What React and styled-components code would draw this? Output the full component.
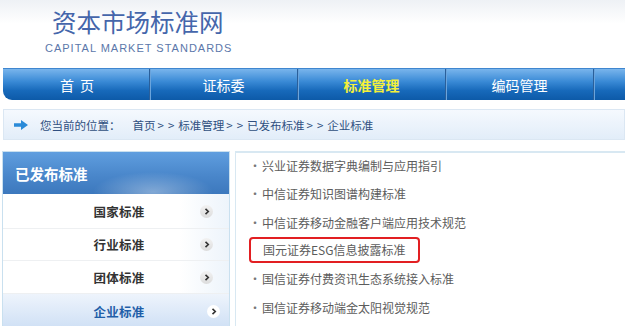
import React from "react";
import styled, { createGlobalStyle } from "styled-components";

const GlobalStyle = createGlobalStyle`
  body {
    margin: 0;
    background: #fff;
    font-family: "Noto Sans CJK SC", "Noto Sans", sans-serif;
  }
`;

const Page = styled.div`
  width: 625px;
  height: 326px;
  overflow: hidden;
  background: #fff;
`;

const Header = styled.div`
  height: 68px;
  padding-left: 45px;
  box-sizing: border-box;
  background: linear-gradient(#eef1f5, #fff 35%);
  display: flex;
  flex-direction: column;
`;

const LogoTitle = styled.div`
  margin: 6px 0 0 7px;
  font-size: 24.5px;
  line-height: 32px;
  color: #4566ab;
`;

const LogoSub = styled.div`
  margin-top: 4px;
  font-family: "Liberation Sans", Arial, sans-serif;
  font-size: 11px;
  line-height: 12px;
  letter-spacing: 1px;
  color: #5b77aa;
`;

const NavBar = styled.div`
  height: 32px;
  margin-left: 3px;
  display: flex;
  border-bottom-left-radius: 9px;
  border-top: 1px solid #3f86cf;
  box-sizing: border-box;
  background: linear-gradient(#79b5ec 0%, #3a8ad6 40%, #1769ba 70%, #0d5aa8 100%);
`;

const NavItem = styled.div`
  width: 148px;
  flex-shrink: 0;
  display: flex;
  align-items: center;
  justify-content: center;
  font-size: 14px;
  padding-left: ${(p) => (p.spaced ? "8px" : "0")};
  box-sizing: border-box;
  color: ${(p) => (p.active ? "#f4f03a" : "#fff")};
  font-weight: ${(p) => (p.active ? "bold" : "normal")};
  letter-spacing: ${(p) => (p.spaced ? "6px" : "0")};
  border-right: 1px solid #2a5f9a;
  box-shadow: 1px 0 0 #6aa4dc;
  &:first-child {
    width: 147px;
  }
`;

const Crumb = styled.div`
  margin: 9px 0 0 3px;
  height: 31px;
  box-sizing: border-box;
  border: 1px solid #dbe7f3;
  background: linear-gradient(#f5f9fe, #e2edf9);
  display: flex;
  align-items: center;
  padding-left: 10px;
  font-size: 11.5px;
  color: #2f4f80;
`;

const CrumbArrow = styled.svg`
  width: 14px;
  height: 10px;
  margin-right: 12px;
`;

const CrumbLabel = styled.span`
  margin-right: 12px;
`;

const Gt = styled.span`
  letter-spacing: 4px;
  margin-left: 2px;
`;

const Main = styled.div`
  margin-top: 11px;
  display: flex;
  align-items: flex-start;
`;

const Sidebar = styled.div`
  width: 228px;
  margin-left: 2px;
  flex-shrink: 0;
  border: 1px solid #c9e0ef;
  border-bottom: none;
  box-sizing: border-box;
`;

const SideHead = styled.div`
  height: 42px;
  display: flex;
  align-items: center;
  padding-left: 12px;
  font-size: 14.5px;
  font-weight: bold;
  color: #fff;
  background:
    radial-gradient(ellipse 60px 20px at 150px 40px, rgba(255, 255, 255, 0.35), transparent),
    linear-gradient(#5f9edf, #4a87cb 55%, #3c78bd);
`;

const SideList = styled.div`
  background: linear-gradient(to right, #fff 78%, #edf4fb);
`;

const SideRow = styled.div`
  height: ${(p) => p.h}px;
  box-sizing: border-box;
  display: flex;
  align-items: center;
  font-size: 12.5px;
  font-weight: bold;
  color: ${(p) => (p.active ? "#1f5ea8" : "#333")};
  background: ${(p) => (p.active ? "linear-gradient(#eef4fc, #cfe0f5)" : "transparent")};
  border-bottom: ${(p) => (p.last ? "none" : "1px solid #eef0f2")};
`;

const SideText = styled.span`
  width: 150px;
  margin-left: 41px;
  text-align: center;
  letter-spacing: 0.3px;
`;

const Chevron = styled.span`
  width: 13px;
  height: 13px;
  border-radius: 50%;
  background: ${(p) => (p.active ? "#fff" : "linear-gradient(#f2f2f2, #dcdcdc)")};
  display: flex;
  align-items: center;
  justify-content: center;
  margin-left: ${(p) => (p.active ? "13px" : "6px")};
`;

const Content = styled.div`
  flex: 1;
  margin-left: 5px;
  height: 176px;
  border-top: 2px solid #d8e8f2;
  border-left: 1px solid #d8e8f2;
  box-sizing: border-box;
`;

const ListRow = styled.div`
  height: ${(p) => p.h}px;
  display: flex;
  align-items: center;
  padding-left: 13px;
  font-size: 12px;
  color: #5c5c5c;
  white-space: nowrap;
`;

const Dot = styled.span`
  width: 13px;
  color: #777;
`;

const Marked = styled.span`
  padding: 2px 12px 3px 12px;
  border: 2px solid #e21f22;
  border-radius: 4px;
`;

const Arrow = () => (
  <CrumbArrow viewBox="0 0 14 10">
    <path d="M0 3.2h7V0l7 5-7 5V6.8H0z" fill="#2a8ad8" />
  </CrumbArrow>
);

const ChevronIcon = ({ active }) => (
  <Chevron active={active}>
    <svg width="6" height="7" viewBox="0 0 6 7">
      <path d="M1.5 0.8L4.3 3.5 1.5 6.2" fill="none" stroke="#333" strokeWidth="1.6" />
    </svg>
  </Chevron>
);

const navItems = [
  { label: "首页", spaced: true },
  { label: "证标委" },
  { label: "标准管理", active: true },
  { label: "编码管理" },
  { label: "" },
];

const sideItems = [
  { label: "国家标准", h: 35 },
  { label: "行业标准", h: 32 },
  { label: "团体标准", h: 33 },
  { label: "企业标准", h: 34, active: true, last: true },
];

const trail = ["首页", "标准管理", "已发布标准", "企业标准"];

const docs = [
  { title: "兴业证券数据字典编制与应用指引", h: 25 },
  { title: "中信证券知识图谱构建标准", h: 30 },
  { title: "中信证券移动金融客户端应用技术规范", h: 28 },
  { title: "国元证券ESG信息披露标准", h: 27, marked: true },
  { title: "国信证券付费资讯生态系统接入标准", h: 30 },
  { title: "国信证券移动端金太阳视觉规范", h: 28 },
];

export default function App() {
  return (
    <Page>
      <GlobalStyle />
      <Header>
        <LogoTitle>资本市场标准网</LogoTitle>
        <LogoSub>CAPITAL MARKET STANDARDS</LogoSub>
      </Header>
      <NavBar>
        {navItems.map((n, i) => (
          <NavItem key={i} active={n.active} spaced={n.spaced}>
            {n.label}
          </NavItem>
        ))}
      </NavBar>
      <Crumb>
        <Arrow />
        <CrumbLabel>您当前的位置：</CrumbLabel>
        {trail.map((t, i) => (
          <React.Fragment key={t}>
            {i > 0 && <Gt>&gt;&gt;</Gt>}
            {t}
          </React.Fragment>
        ))}
      </Crumb>
      <Main>
        <Sidebar>
          <SideHead>已发布标准</SideHead>
          <SideList>
            {sideItems.map((s) => (
              <SideRow key={s.label} h={s.h} active={s.active} last={s.last}>
                <SideText>{s.label}</SideText>
                <ChevronIcon active={s.active} />
              </SideRow>
            ))}
          </SideList>
        </Sidebar>
        <Content>
          {docs.map((d) => (
            <ListRow key={d.title} h={d.h}>
              {d.marked ? (
                <Marked>{d.title}</Marked>
              ) : (
                <>
                  <Dot>·</Dot>
                  {d.title}
                </>
              )}
            </ListRow>
          ))}
        </Content>
      </Main>
    </Page>
  );
}
